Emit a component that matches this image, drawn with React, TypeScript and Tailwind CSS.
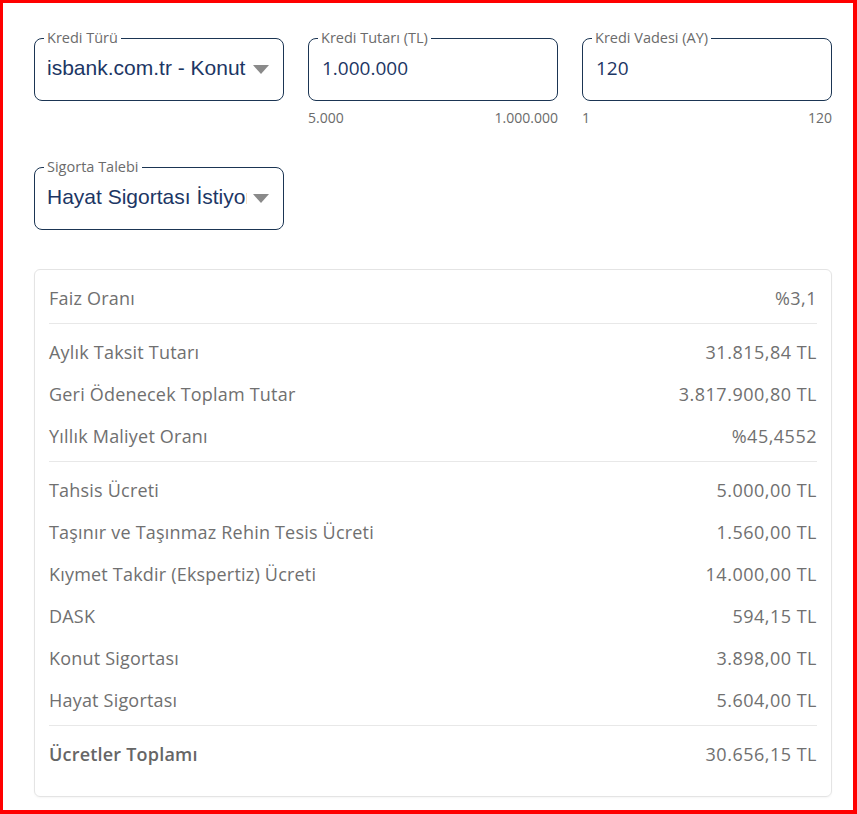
import React from 'react';

const sans = "font-['Open_Sans','Lato',sans-serif]";
const arial = "font-['Liberation_Sans',Arial,sans-serif]";

function Field({ label, children }: { label: string; children: React.ReactNode }) {
  return (
    <div className="relative h-[63px] rounded-[8px] border border-[#1b3553]">
      <span className={`absolute -top-[11px] left-[9px] bg-white px-[3px] text-[14.5px] leading-[20px] text-[#6b6b6b] ${sans}`}>
        {label}
      </span>
      {children}
    </div>
  );
}

function SelectField({ label, value }: { label: string; value: string }) {
  return (
    <Field label={label}>
      <div className="flex h-full items-start pl-[12px] pr-[14px] pt-[16px]">
        <span className={`flex-1 overflow-hidden whitespace-nowrap text-[21px] leading-[26px] text-[#1c3664] ${arial}`}>
          {value}
        </span>
        <svg width="16" height="9" viewBox="0 0 16 9" className="ml-[6px] mt-[10px] shrink-0">
          <path d="M0 0 L16 0 L8 9 Z" fill="#8a8a8a" />
        </svg>
      </div>
    </Field>
  );
}

function InputField({ label, value, min, max }: { label: string; value: string; min: string; max: string }) {
  return (
    <div>
      <Field label={label}>
        <div className={`pl-[13px] pt-[16px] text-[19px] leading-[26px] text-[#1c3664] ${sans}`}>{value}</div>
      </Field>
      <div className={`mt-[8px] flex justify-between text-[14px] leading-[18px] text-[#6b6b6b] ${sans}`}>
        <span>{min}</span>
        <span>{max}</span>
      </div>
    </div>
  );
}

function Row({ label, value, bold }: { label: string; value: string; bold?: boolean }) {
  return (
    <div className={`flex h-[42px] items-center justify-between px-[14px] text-[18px] ${bold ? 'font-semibold text-[#666]' : 'text-[#707070]'}`}>
      <span className="tracking-[0.2px]">{label}</span>
      <span className="font-normal tracking-[0.5px] text-[#707070]">{value}</span>
    </div>
  );
}

function Divider() {
  return <div className="mx-[14px] mb-[7px] mt-[4px] h-px bg-[#e8e8e8]" />;
}

export default function App() {
  return (
    <div className="h-[814px] w-[857px] border-b-[4px] border-l-[3px] border-r-[4px] border-t-[3px] border-[#ff0000] bg-white">
      <div className="pl-[31px] pr-[21px] pt-[35px]">
        <div className="grid grid-cols-3 gap-x-[24px]">
          <SelectField label="Kredi Türü" value="isbank.com.tr - Konut Kredisi" />
          <InputField label="Kredi Tutarı (TL)" value="1.000.000" min="5.000" max="1.000.000" />
          <InputField label="Kredi Vadesi (AY)" value="120" min="1" max="120" />
        </div>

        <div className="mt-[40px] grid grid-cols-3 gap-x-[24px]">
          <SelectField label="Sigorta Talebi" value="Hayat Sigortası İstiyorum" />
        </div>

        <div className={`mt-[39px] rounded-[6px] border border-[#e4e4e4] pb-[21px] pt-[7px] shadow-[0_1px_2px_rgba(0,0,0,0.04)] ${sans}`}>
          <Row label="Faiz Oranı" value="%3,1" />
          <Divider />
          <Row label="Aylık Taksit Tutarı" value="31.815,84 TL" />
          <Row label="Geri Ödenecek Toplam Tutar" value="3.817.900,80 TL" />
          <Row label="Yıllık Maliyet Oranı" value="%45,4552" />
          <Divider />
          <Row label="Tahsis Ücreti" value="5.000,00 TL" />
          <Row label="Taşınır ve Taşınmaz Rehin Tesis Ücreti" value="1.560,00 TL" />
          <Row label="Kıymet Takdir (Ekspertiz) Ücreti" value="14.000,00 TL" />
          <Row label="DASK" value="594,15 TL" />
          <Row label="Konut Sigortası" value="3.898,00 TL" />
          <Row label="Hayat Sigortası" value="5.604,00 TL" />
          <Divider />
          <Row label="Ücretler Toplamı" value="30.656,15 TL" bold />
        </div>
      </div>
    </div>
  );
}
